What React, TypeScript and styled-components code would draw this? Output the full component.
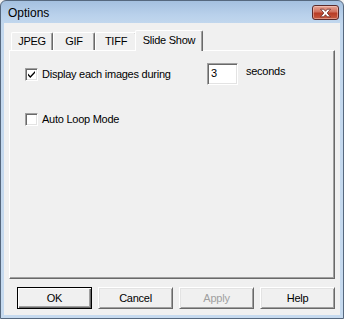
import React from "react";
import styled, { createGlobalStyle } from "styled-components";

const GlobalStyle = createGlobalStyle`
  html, body { margin: 0; padding: 0; background: #f0f0f0; }
  body { font-family: "Liberation Sans", Arial, sans-serif; font-size: 11px; color: #000; }
  * { box-sizing: border-box; }
`;

const Window = styled.div`
  width: 344px;
  height: 319px;
  display: flex;
  flex-direction: column;
  border: 1px solid #56687e;
  border-radius: 6px 6px 0 0;
  background: linear-gradient(to bottom, #a4c0df 0px, #b9d1eb 14px, #c3d8ee 24px, #c6daef 100%);
  overflow: hidden;
`;

const TitleBar = styled.div`
  height: 22px;
  flex: none;
  display: flex;
  align-items: center;
  justify-content: space-between;
  padding: 0 4px 0 7px;
`;

const Title = styled.span`
  font-size: 12px;
  color: #000;
  padding-top: 1px;
`;

const CloseButton = styled.div`
  width: 27px;
  height: 15px;
  margin-top: 1px;
  border: 1px solid #5a2a2a;
  border-radius: 3px;
  background: linear-gradient(to bottom, #e6a595 0%, #d0705d 45%, #b83c25 55%, #c65a40 100%);
  display: flex;
  align-items: center;
  justify-content: center;
  box-shadow: inset 0 0 0 1px rgba(255, 220, 210, 0.45);
`;

const Client = styled.div`
  flex: 1;
  margin: 0 3px 3px 3px;
  background: #f0f0f0;
  padding: 7px 5px 0 5px;
  display: flex;
  flex-direction: column;
  letter-spacing: -0.25px;
`;

const TabStrip = styled.div`
  display: flex;
  align-items: flex-end;
  height: 20px;
  padding-left: 2px;
  position: relative;
  z-index: 1;
`;

const Tab = styled.div<{ $active?: boolean; $w: number }>`
  width: ${(p) => p.$w}px;
  height: ${(p) => (p.$active ? 21 : 18)}px;
  margin-left: ${(p) => (p.$active ? -2 : 0)}px;
  margin-bottom: ${(p) => (p.$active ? -1 : 0)}px;
  align-self: ${(p) => (p.$active ? "flex-start" : "flex-end")};
  background: #f0f0f0;
  border-top: 1px solid #ffffff;
  border-left: 1px solid #ffffff;
  border-right: 1px solid #696969;
  box-shadow: inset -1px 0 0 #a0a0a0;
  border-radius: 2px 2px 0 0;
  display: flex;
  justify-content: center;
  padding-top: ${(p) => (p.$active ? 3 : 2)}px;
  font-size: 11px;
  white-space: nowrap;
`;

const Panel = styled.div`
  height: 229px;
  border-top: 1px solid #ffffff;
  border-left: 1px solid #ffffff;
  border-right: 1px solid #696969;
  border-bottom: 1px solid #696969;
  box-shadow: inset -1px -1px 0 #a0a0a0;
  padding: 12px 0 0 15px;
  display: flex;
  flex-direction: column;
`;

const Row = styled.div<{ $gap?: number }>`
  display: flex;
  align-items: center;
  height: 22px;
  margin-top: ${(p) => p.$gap ?? 0}px;
`;

const CheckBox = styled.div`
  width: 13px;
  height: 13px;
  flex: none;
  background: #fff;
  border-top: 1px solid #a0a0a0;
  border-left: 1px solid #a0a0a0;
  border-right: 1px solid #ffffff;
  border-bottom: 1px solid #ffffff;
  box-shadow: inset 1px 1px 0 #696969, inset -1px -1px 0 #e3e3e3;
  display: flex;
  align-items: center;
  justify-content: center;
`;

const Label = styled.span<{ $w?: number }>`
  margin-left: 4px;
  width: ${(p) => (p.$w ? `${p.$w}px` : "auto")};
  white-space: nowrap;
`;

const NumberBox = styled.div`
  width: 31px;
  height: 22px;
  background: #fff;
  border-top: 1px solid #a0a0a0;
  border-left: 1px solid #a0a0a0;
  border-right: 1px solid #ffffff;
  border-bottom: 1px solid #ffffff;
  box-shadow: inset 1px 1px 0 #696969, inset -1px -1px 0 #e3e3e3;
  padding: 3px 0 0 3px;
  font-size: 11px;
`;

const Units = styled.span`
  margin-left: 8px;
  align-self: flex-start;
  padding-top: 2px;
`;

const ButtonRow = styled.div`
  display: flex;
  gap: 6px;
  margin-top: 8px;
  padding-left: 8px;
`;

const Button = styled.div<{ $default?: boolean; $disabled?: boolean }>`
  width: 75px;
  height: 22px;
  display: flex;
  align-items: center;
  justify-content: center;
  background: #f0f0f0;
  color: ${(p) => (p.$disabled ? "#a0a0a0" : "#000")};
  font-size: 11px;
  border: 1px solid;
  border-color: ${(p) => (p.$default ? "#000" : "#fff #696969 #696969 #fff")};
  box-shadow: ${(p) =>
    p.$default
      ? "inset 1px 1px 0 #fff, inset -1px -1px 0 #696969, inset -2px -2px 0 #a0a0a0"
      : "inset 1px 1px 0 #e3e3e3, inset -1px -1px 0 #a0a0a0"};
`;

const CheckMark = () => (
  <svg width="9" height="9" viewBox="0 0 9 9">
    <path d="M1 3.5 L3.3 6 L8 1 L8 3 L3.3 8 L1 5.5 Z" fill="#000" />
  </svg>
);

const CloseX = () => (
  <svg width="13" height="10" viewBox="0 0 13 10">
    <path
      d="M1.5 1.2 L4.8 1.2 L6.5 3.3 L8.2 1.2 L11.5 1.2 L8.2 5 L11.5 8.8 L8.2 8.8 L6.5 6.7 L4.8 8.8 L1.5 8.8 L4.8 5 Z"
      fill="#ffffff"
      stroke="#6a2a24"
      strokeWidth="0.8"
      strokeLinejoin="round"
    />
  </svg>
);

export default function App() {
  return (
    <>
      <GlobalStyle />
      <Window>
        <TitleBar>
          <Title>Options</Title>
          <CloseButton>
            <CloseX />
          </CloseButton>
        </TitleBar>
        <Client>
          <TabStrip>
            <Tab $w={42}>JPEG</Tab>
            <Tab $w={42}>GIF</Tab>
            <Tab $w={42}>TIFF</Tab>
            <Tab $w={68} $active>
              Slide Show
            </Tab>
          </TabStrip>
          <Panel>
            <Row>
              <CheckBox>
                <CheckMark />
              </CheckBox>
              <Label $w={165}>Display each images during</Label>
              <NumberBox>3</NumberBox>
              <Units>seconds</Units>
            </Row>
            <Row $gap={23}>
              <CheckBox />
              <Label>Auto Loop Mode</Label>
            </Row>
          </Panel>
          <ButtonRow>
            <Button $default>OK</Button>
            <Button>Cancel</Button>
            <Button $disabled>Apply</Button>
            <Button>Help</Button>
          </ButtonRow>
        </Client>
      </Window>
    </>
  );
}
